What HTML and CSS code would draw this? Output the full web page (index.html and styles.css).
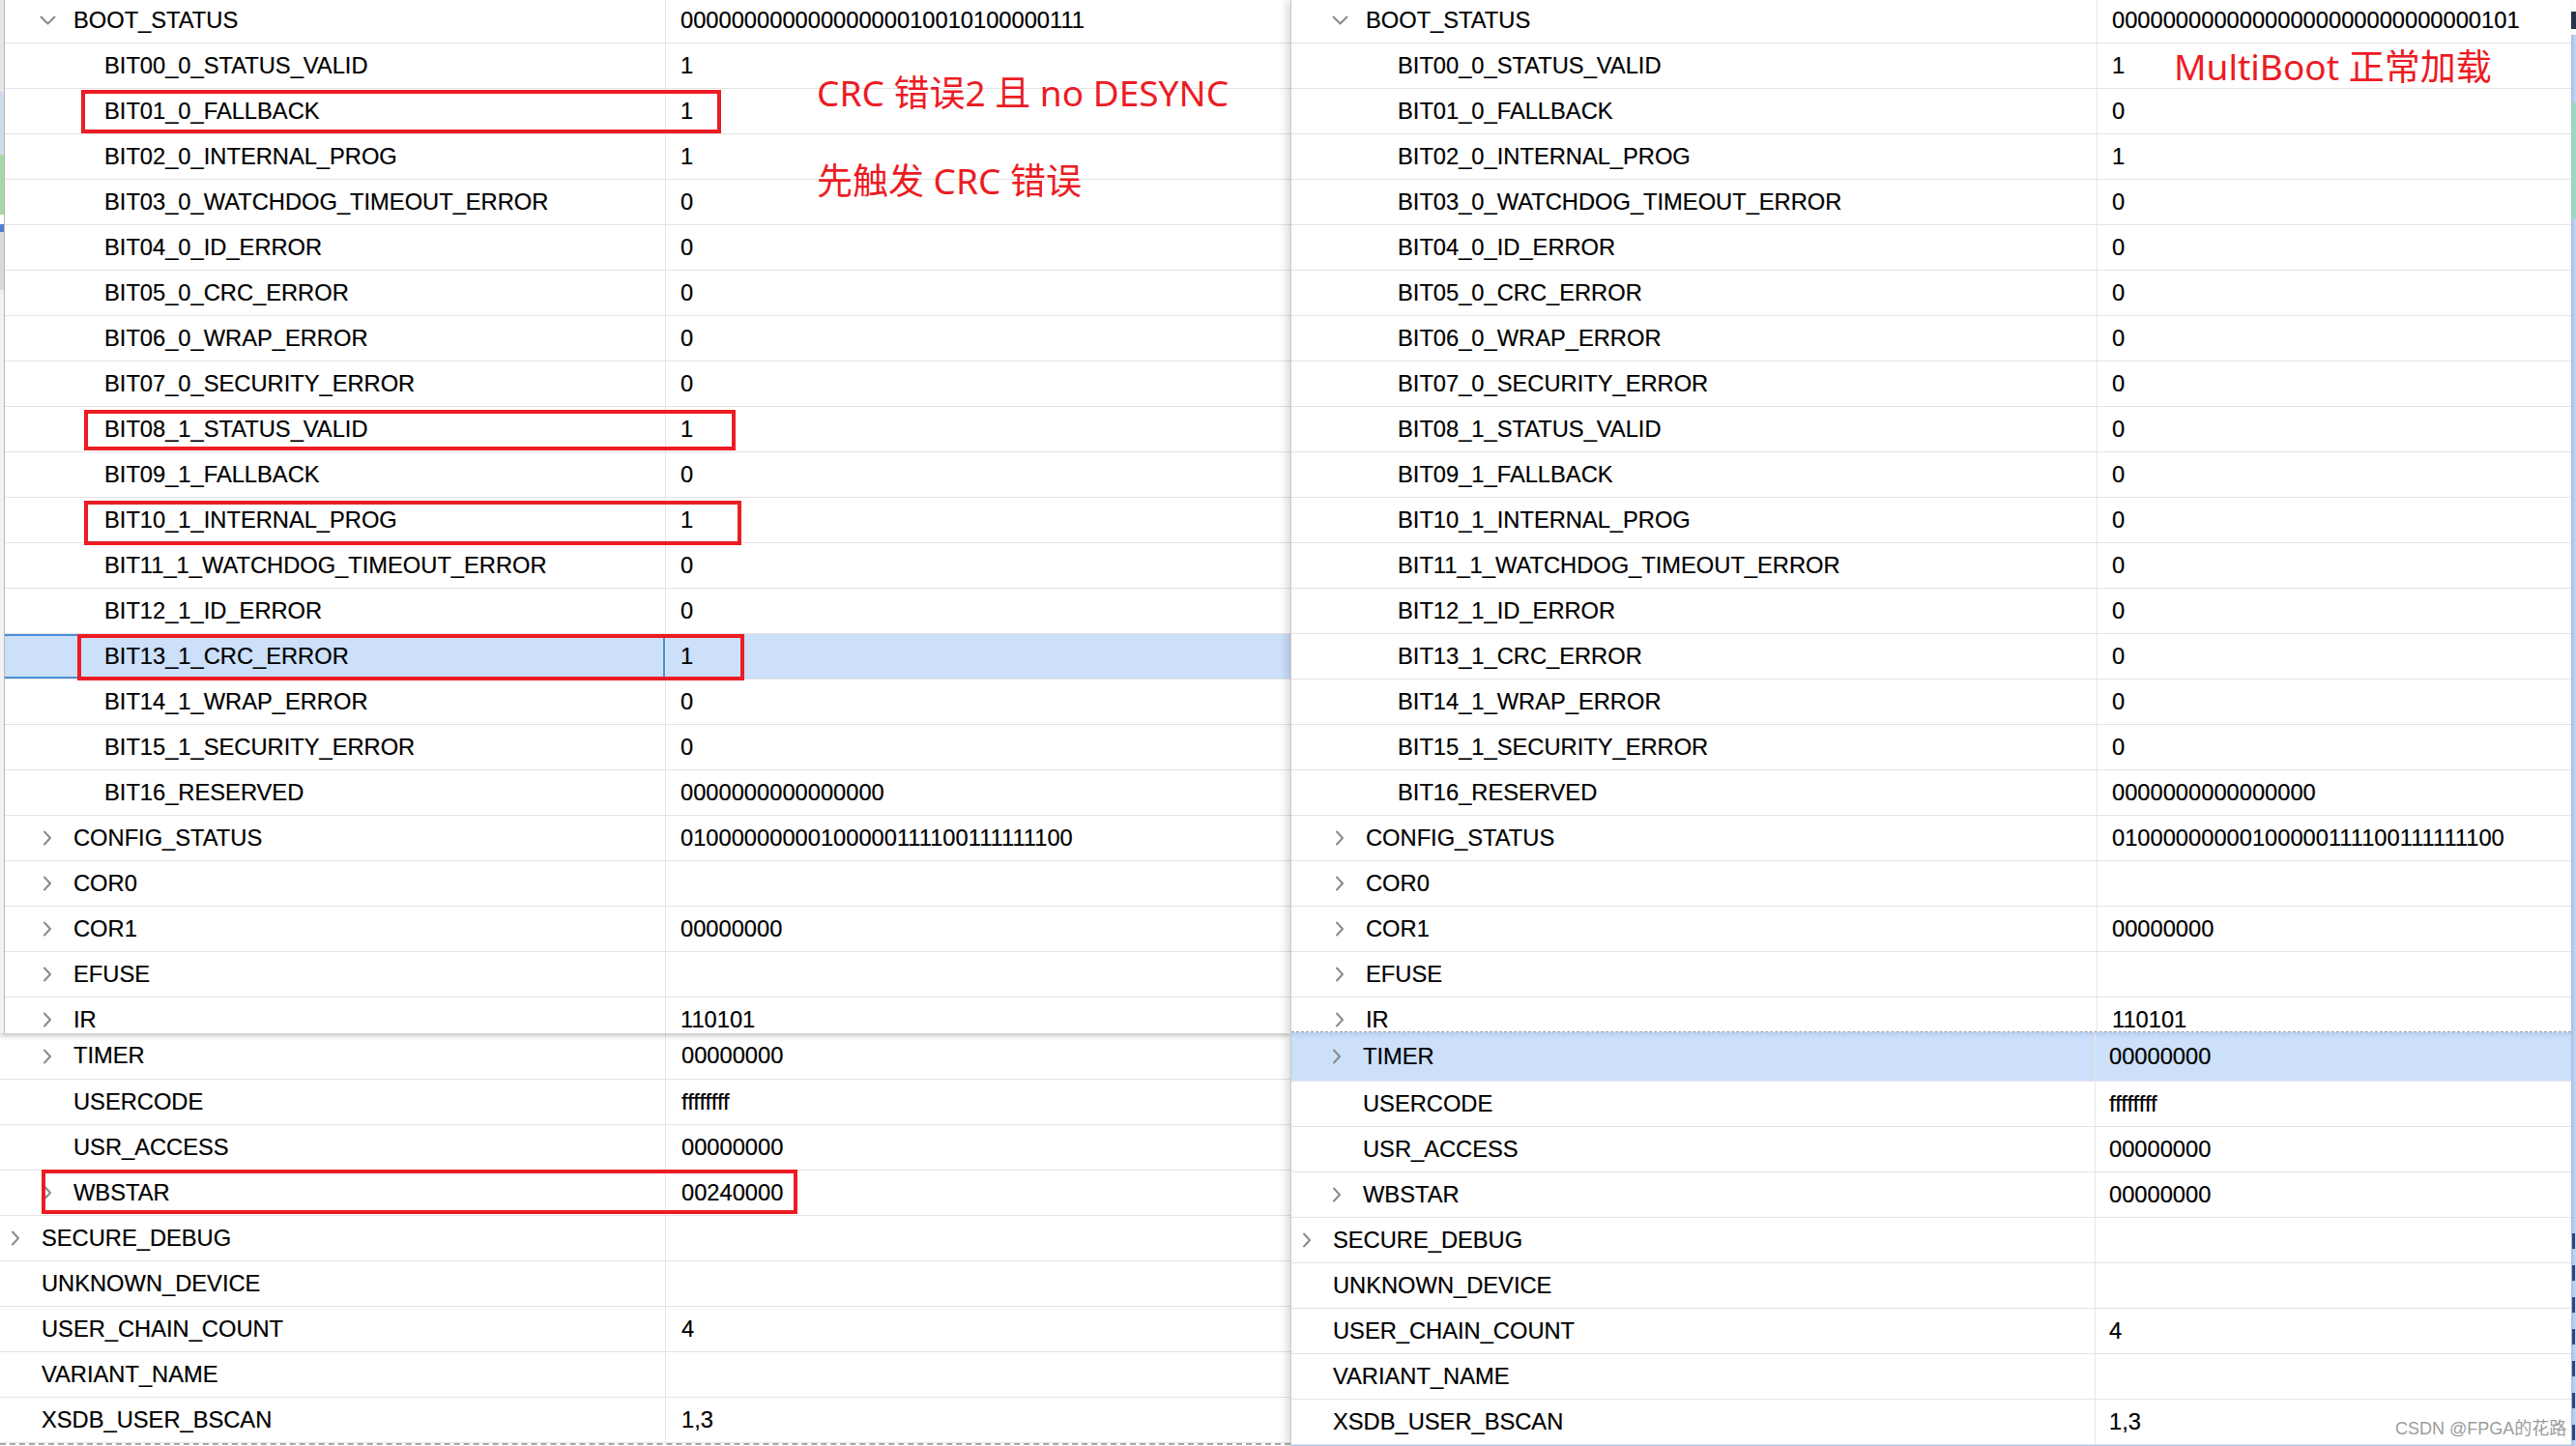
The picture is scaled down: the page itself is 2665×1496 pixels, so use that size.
FILE: index.html
```html
<!DOCTYPE html>
<html lang="zh-CN">
<head>
<meta charset="utf-8">
<title>BOOT_STATUS compare</title>
<link rel="stylesheet" href="styles.css">
</head>
<body>
<div class="page">

  <!-- LEFT SCREENSHOT -->
  <div class="panel left">
    <div class="sec lt">
      <div class="edge-strip"></div>
      <div class="table">
        <div class="rows">
          <div class="row"><div class="name t0"><span class="chev"><svg width="17" height="10" viewBox="0 0 17 10"><path d="M1.5 1.5 L8.5 8.5 L15.5 1.5" /></svg></span>BOOT_STATUS</div><div class="val">00000000000000000010010100000111</div></div>
          <div class="row"><div class="name t1">BIT00_0_STATUS_VALID</div><div class="val">1</div></div>
          <div class="row"><div class="name t1">BIT01_0_FALLBACK</div><div class="val">1</div></div>
          <div class="row"><div class="name t1">BIT02_0_INTERNAL_PROG</div><div class="val">1</div></div>
          <div class="row"><div class="name t1">BIT03_0_WATCHDOG_TIMEOUT_ERROR</div><div class="val">0</div></div>
          <div class="row"><div class="name t1">BIT04_0_ID_ERROR</div><div class="val">0</div></div>
          <div class="row"><div class="name t1">BIT05_0_CRC_ERROR</div><div class="val">0</div></div>
          <div class="row"><div class="name t1">BIT06_0_WRAP_ERROR</div><div class="val">0</div></div>
          <div class="row"><div class="name t1">BIT07_0_SECURITY_ERROR</div><div class="val">0</div></div>
          <div class="row"><div class="name t1">BIT08_1_STATUS_VALID</div><div class="val">1</div></div>
          <div class="row"><div class="name t1">BIT09_1_FALLBACK</div><div class="val">0</div></div>
          <div class="row"><div class="name t1">BIT10_1_INTERNAL_PROG</div><div class="val">1</div></div>
          <div class="row"><div class="name t1">BIT11_1_WATCHDOG_TIMEOUT_ERROR</div><div class="val">0</div></div>
          <div class="row"><div class="name t1">BIT12_1_ID_ERROR</div><div class="val">0</div></div>
          <div class="row sel"><div class="name t1 focus">BIT13_1_CRC_ERROR</div><div class="val">1</div></div>
          <div class="row"><div class="name t1">BIT14_1_WRAP_ERROR</div><div class="val">0</div></div>
          <div class="row"><div class="name t1">BIT15_1_SECURITY_ERROR</div><div class="val">0</div></div>
          <div class="row"><div class="name t1">BIT16_RESERVED</div><div class="val">0000000000000000</div></div>
          <div class="row"><div class="name t0"><span class="chev"><svg width="10" height="16" viewBox="0 0 10 16"><path d="M2 1.5 L8 8 L2 14.5" /></svg></span>CONFIG_STATUS</div><div class="val">01000000000100000111100111111100</div></div>
          <div class="row"><div class="name t0"><span class="chev"><svg width="10" height="16" viewBox="0 0 10 16"><path d="M2 1.5 L8 8 L2 14.5" /></svg></span>COR0</div><div class="val"></div></div>
          <div class="row"><div class="name t0"><span class="chev"><svg width="10" height="16" viewBox="0 0 10 16"><path d="M2 1.5 L8 8 L2 14.5" /></svg></span>COR1</div><div class="val">00000000</div></div>
          <div class="row"><div class="name t0"><span class="chev"><svg width="10" height="16" viewBox="0 0 10 16"><path d="M2 1.5 L8 8 L2 14.5" /></svg></span>EFUSE</div><div class="val"></div></div>
          <div class="row"><div class="name t0"><span class="chev"><svg width="10" height="16" viewBox="0 0 10 16"><path d="M2 1.5 L8 8 L2 14.5" /></svg></span>IR</div><div class="val">110101</div></div>
        </div>
      </div>
    </div>
    <div class="sec lb">
      <div class="row first"><div class="name tb"><span class="chev"><svg width="10" height="16" viewBox="0 0 10 16"><path d="M2 1.5 L8 8 L2 14.5" /></svg></span>TIMER</div><div class="val">00000000</div></div>
      <div class="row"><div class="name tb">USERCODE</div><div class="val">ffffffff</div></div>
      <div class="row"><div class="name tb">USR_ACCESS</div><div class="val">00000000</div></div>
      <div class="row"><div class="name tb"><span class="chev"><svg width="10" height="16" viewBox="0 0 10 16"><path d="M2 1.5 L8 8 L2 14.5" /></svg></span>WBSTAR</div><div class="val">00240000</div></div>
      <div class="row"><div class="name ta"><span class="chev"><svg width="10" height="16" viewBox="0 0 10 16"><path d="M2 1.5 L8 8 L2 14.5" /></svg></span>SECURE_DEBUG</div><div class="val"></div></div>
      <div class="row"><div class="name ta">UNKNOWN_DEVICE</div><div class="val"></div></div>
      <div class="row"><div class="name ta">USER_CHAIN_COUNT</div><div class="val">4</div></div>
      <div class="row"><div class="name ta">VARIANT_NAME</div><div class="val"></div></div>
      <div class="row"><div class="name ta">XSDB_USER_BSCAN</div><div class="val">1,3</div></div>
    </div>
  </div>

  <!-- RIGHT SCREENSHOT -->
  <div class="panel right">
    <div class="sec rt">
      <div class="rows">
        <div class="row"><div class="name t0"><span class="chev"><svg width="17" height="10" viewBox="0 0 17 10"><path d="M1.5 1.5 L8.5 8.5 L15.5 1.5" /></svg></span>BOOT_STATUS</div><div class="val">00000000000000000000000000000101</div></div>
        <div class="row"><div class="name t1">BIT00_0_STATUS_VALID</div><div class="val">1</div></div>
        <div class="row"><div class="name t1">BIT01_0_FALLBACK</div><div class="val">0</div></div>
        <div class="row"><div class="name t1">BIT02_0_INTERNAL_PROG</div><div class="val">1</div></div>
        <div class="row"><div class="name t1">BIT03_0_WATCHDOG_TIMEOUT_ERROR</div><div class="val">0</div></div>
        <div class="row"><div class="name t1">BIT04_0_ID_ERROR</div><div class="val">0</div></div>
        <div class="row"><div class="name t1">BIT05_0_CRC_ERROR</div><div class="val">0</div></div>
        <div class="row"><div class="name t1">BIT06_0_WRAP_ERROR</div><div class="val">0</div></div>
        <div class="row"><div class="name t1">BIT07_0_SECURITY_ERROR</div><div class="val">0</div></div>
        <div class="row"><div class="name t1">BIT08_1_STATUS_VALID</div><div class="val">0</div></div>
        <div class="row"><div class="name t1">BIT09_1_FALLBACK</div><div class="val">0</div></div>
        <div class="row"><div class="name t1">BIT10_1_INTERNAL_PROG</div><div class="val">0</div></div>
        <div class="row"><div class="name t1">BIT11_1_WATCHDOG_TIMEOUT_ERROR</div><div class="val">0</div></div>
        <div class="row"><div class="name t1">BIT12_1_ID_ERROR</div><div class="val">0</div></div>
        <div class="row"><div class="name t1">BIT13_1_CRC_ERROR</div><div class="val">0</div></div>
        <div class="row"><div class="name t1">BIT14_1_WRAP_ERROR</div><div class="val">0</div></div>
        <div class="row"><div class="name t1">BIT15_1_SECURITY_ERROR</div><div class="val">0</div></div>
        <div class="row"><div class="name t1">BIT16_RESERVED</div><div class="val">0000000000000000</div></div>
        <div class="row"><div class="name t0"><span class="chev"><svg width="10" height="16" viewBox="0 0 10 16"><path d="M2 1.5 L8 8 L2 14.5" /></svg></span>CONFIG_STATUS</div><div class="val">01000000000100000111100111111100</div></div>
        <div class="row"><div class="name t0"><span class="chev"><svg width="10" height="16" viewBox="0 0 10 16"><path d="M2 1.5 L8 8 L2 14.5" /></svg></span>COR0</div><div class="val"></div></div>
        <div class="row"><div class="name t0"><span class="chev"><svg width="10" height="16" viewBox="0 0 10 16"><path d="M2 1.5 L8 8 L2 14.5" /></svg></span>COR1</div><div class="val">00000000</div></div>
        <div class="row"><div class="name t0"><span class="chev"><svg width="10" height="16" viewBox="0 0 10 16"><path d="M2 1.5 L8 8 L2 14.5" /></svg></span>EFUSE</div><div class="val"></div></div>
        <div class="row"><div class="name t0"><span class="chev"><svg width="10" height="16" viewBox="0 0 10 16"><path d="M2 1.5 L8 8 L2 14.5" /></svg></span>IR</div><div class="val">110101</div></div>
      </div>
    </div>
    <div class="sec rb">
      <div class="row first sel"><div class="name tb"><span class="chev"><svg width="10" height="16" viewBox="0 0 10 16"><path d="M2 1.5 L8 8 L2 14.5" /></svg></span>TIMER</div><div class="val">00000000</div></div>
      <div class="row"><div class="name tb">USERCODE</div><div class="val">ffffffff</div></div>
      <div class="row"><div class="name tb">USR_ACCESS</div><div class="val">00000000</div></div>
      <div class="row"><div class="name tb"><span class="chev"><svg width="10" height="16" viewBox="0 0 10 16"><path d="M2 1.5 L8 8 L2 14.5" /></svg></span>WBSTAR</div><div class="val">00000000</div></div>
      <div class="row"><div class="name ta"><span class="chev"><svg width="10" height="16" viewBox="0 0 10 16"><path d="M2 1.5 L8 8 L2 14.5" /></svg></span>SECURE_DEBUG</div><div class="val"></div></div>
      <div class="row"><div class="name ta">UNKNOWN_DEVICE</div><div class="val"></div></div>
      <div class="row"><div class="name ta">USER_CHAIN_COUNT</div><div class="val">4</div></div>
      <div class="row"><div class="name ta">VARIANT_NAME</div><div class="val"></div></div>
      <div class="row"><div class="name ta">XSDB_USER_BSCAN</div><div class="val">1,3</div></div>
    </div>
  </div>

  <div class="side-strip">
    <div class="side-top"></div>
    <div class="side-green"></div>
    <div class="side-body">
      <i></i><i></i><i></i><i></i><i></i><i></i><i></i>
    </div>
  </div>

  <!-- annotations over the screenshots -->
  <div class="mark m1"></div>
  <div class="mark m2"></div>
  <div class="mark m3"></div>
  <div class="mark m4"></div>
  <div class="mark m5"></div>

  <div class="note n1">CRC 错误2 且 no DESYNC</div>
  <div class="note n2">先触发 CRC 错误</div>
  <div class="note n3">MultiBoot 正常加载</div>

  <div class="watermark">CSDN @FPGA的花路</div>
</div>
</body>
</html>
```

FILE: styles.css
```css
html, body {
  margin: 0;
  padding: 0;
  background: #ffffff;
  overflow: hidden;
}

.page {
  position: relative;
  width: 2665px;
  height: 1496px;
  display: flex;
  font-family: "Liberation Sans", Arial, "Noto Sans CJK SC", sans-serif;
  font-size: 23.7px;
  color: #000;
  background: #fff;
  -webkit-text-stroke: 0.2px #000;
}

.panel {
  display: flex;
  flex-direction: column;
  flex: none;
}

.panel.left {
  width: 1335px;
}

.panel.right {
  width: 1325px;
  border-left: 1px solid #c9c9c9;
  box-sizing: border-box;
  position: relative;
  z-index: 2;
  box-shadow: -4px 0 8px rgba(0, 0, 0, 0.14);
  background: #fff;
}

/* generic rows */
.row {
  display: flex;
  height: 47px;
  box-sizing: border-box;
  border-bottom: 1px solid #e3e3e3;
  flex: none;
}

.name {
  flex: none;
  width: var(--nw);
  box-sizing: border-box;
  border-right: 1px solid #e6e6e6;
  display: flex;
  align-items: center;
  white-space: nowrap;
}

.val {
  flex: 1;
  display: flex;
  align-items: center;
  padding-left: 15px;
  white-space: nowrap;
}

.chev {
  flex: none;
  width: 26px;
  height: 20px;
  margin-left: -40px;
  margin-right: 14px;
  display: flex;
  align-items: center;
  justify-content: center;
}

.chev svg path {
  fill: none;
  stroke: #8a8a8a;
  stroke-width: 2;
  stroke-linecap: round;
  stroke-linejoin: round;
}

.row.sel {
  background: #cce0fa;
}

.name.focus {
  box-shadow: inset 0 2px 0 #4a8fd8, inset 0 -2px 0 #4a8fd8, inset -2px 0 0 #4a8fd8;
}

/* left top */
.sec.lt {
  height: 1069px;
  display: flex;
  overflow: hidden;
  position: relative;
  z-index: 1;
  box-shadow: 0 2px 6px rgba(0, 0, 0, 0.28);
  background: #fff;
  flex: none;
}

.edge-strip {
  width: 5px;
  flex: none;
  background: linear-gradient(to bottom,
    #e6e6e6 0, #e6e6e6 95px,
    #cfdbea 95px, #cfdbea 160px,
    #a6d8a3 160px, #a6d8a3 222px,
    #ffffff 222px, #ffffff 232px,
    #4d7fd0 232px, #4d7fd0 240px,
    #d9d9d9 240px, #d9d9d9 300px,
    #f2f2f2 300px, #f2f2f2 100%);
  border-right: 1px solid #b9b9b9;
  box-sizing: border-box;
}

.lt .table {
  flex: 1;
  --nw: 684px;
}

.rows {
  margin-top: -2px;
}

.lt .t0 { padding-left: 71px; }
.lt .t1 { padding-left: 103px; }

/* left bottom */
.sec.lb {
  --nw: 689px;
  flex: none;
  border-bottom: 2px dashed #a8a8a8;
}

.lb .row.first { height: 48px; }
.lb .ta { padding-left: 43px; }
.lb .tb { padding-left: 76px; }
.lb .val { padding-left: 16px; }

/* right top */
.sec.rt {
  --nw: 834px;
  height: 1067px;
  overflow: hidden;
  flex: none;
}

.rt .t0 { padding-left: 77px; }
.rt .t1 { padding-left: 110px; }

/* right bottom */
.sec.rb {
  --nw: 832px;
  border-top: 1px dashed #9a9a9a;
  border-bottom: 1px solid #a9c4ea;
  flex: none;
}

.rb .row.first {
  height: 51px;
  box-shadow: inset 0 6px 6px -4px rgba(120, 160, 220, 0.35);
}
.rb .ta { padding-left: 43px; }
.rb .tb { padding-left: 74px; }
.rb .val { padding-left: 14px; }

/* right edge strip (another window) */
.side-strip {
  width: 5px;
  flex: none;
  display: flex;
  flex-direction: column;
  overflow: hidden;
  background: linear-gradient(to right, #a8c3ea, #c5d8f3);
}

.side-top {
  height: 36px;
  background: linear-gradient(to bottom, #ffffff 0, #ffffff 12px, #27344a 12px, #27344a 30px, #ffffff 30px);
  flex: none;
}

.side-green {
  margin-top: 70px;
  height: 120px;
  background: #9fd8c6;
  flex: none;
}

.side-body {
  margin-top: 1050px;
  display: flex;
  flex-direction: column;
  gap: 17px;
  padding-left: 1px;
}

.side-body i {
  display: block;
  width: 3px;
  height: 16px;
  background: #1a2f6b;
  opacity: 0.85;
}

/* red annotation boxes */
.mark {
  position: absolute;
  border: 4px solid #ec1c24;
  box-sizing: border-box;
  z-index: 5;
}

.m1 { left: 84px;  top: 93px;   width: 662px; height: 45px; }
.m2 { left: 87px;  top: 424px;  width: 674px; height: 42px; }
.m3 { left: 87px;  top: 518px;  width: 680px; height: 46px; }
.m4 { left: 80px;  top: 656px;  width: 690px; height: 48px; }
.m5 { left: 43px;  top: 1210px; width: 782px; height: 46px; }

/* red annotation text */
.note {
  position: absolute;
  z-index: 5;
  font-family: "Noto Sans", "Noto Sans CJK SC", sans-serif;
  font-size: 37px;
  line-height: 37px;
  color: #ec1c24;
  -webkit-text-stroke: 0;
  white-space: nowrap;
}

.n1 { left: 845px;  top: 77px; }
.n2 { left: 845px;  top: 168px; }
.n3 { left: 2249px; top: 50px; }

.watermark {
  position: absolute;
  z-index: 5;
  left: 2478px;
  top: 1468px;
  font-family: "Liberation Sans", "Noto Sans CJK SC", sans-serif;
  font-size: 18px;
  line-height: 20px;
  color: #9c9c9c;
  -webkit-text-stroke: 0;
  text-shadow: 0 0 2px #fff, 0 0 1px #fff;
  white-space: nowrap;
}
```
